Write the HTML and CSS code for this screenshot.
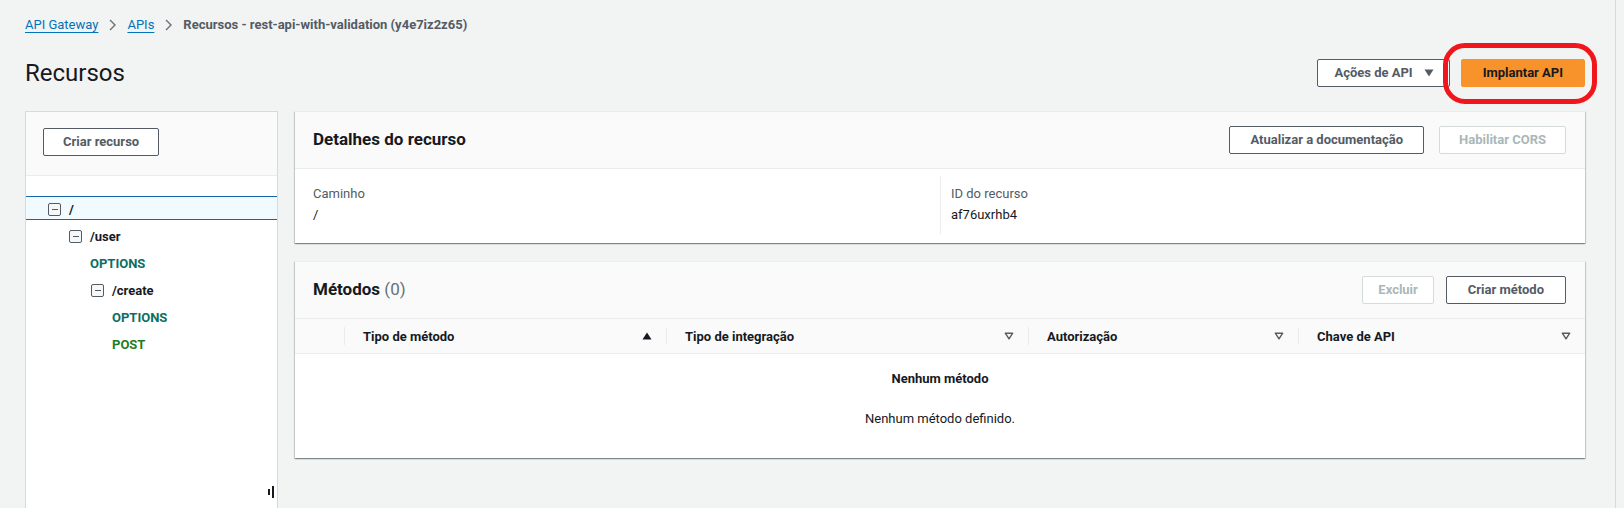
FILE: index.html
```html
<!DOCTYPE html>
<html lang="pt-BR">
<head>
<meta charset="utf-8">
<title>Recursos - API Gateway</title>
<link rel="stylesheet" href="styles.css">
</head>
<body>
<div class="app">
  <main class="main">
    <nav class="crumbs">
      <a class="crumb-link" href="#">API Gateway</a>
      <svg class="chev" width="7" height="12" viewBox="0 0 7 12"><path d="M1 1 L6 6 L1 11" fill="none" stroke="#687078" stroke-width="1.4"/></svg>
      <a class="crumb-link" href="#">APIs</a>
      <svg class="chev" width="7" height="12" viewBox="0 0 7 12"><path d="M1 1 L6 6 L1 11" fill="none" stroke="#687078" stroke-width="1.4"/></svg>
      <span class="crumb-current">Recursos - rest-api-with-validation (y4e7iz2z65)</span>
    </nav>

    <header class="page-head">
      <h1 class="page-title">Recursos</h1>
      <div class="head-actions">
        <button class="btn btn-normal btn-dropdown">Ações de API <svg class="caret" width="10" height="8" viewBox="0 0 10 8"><path d="M0.5 0.5 H9.5 L5 7.5 Z" fill="#545b64"/></svg></button>
        <div class="highlight-wrap">
          <button class="btn btn-primary">Implantar API</button>
          <span class="highlight-ring"></span>
        </div>
      </div>
    </header>

    <div class="content">
      <aside class="tree-panel">
        <div class="tree-head">
          <button class="btn btn-normal btn-create">Criar recurso</button>
        </div>
        <ul class="tree">
          <li class="tree-row is-selected lvl-0"><span class="toggle"></span><span class="res">/</span></li>
          <li class="tree-row lvl-1"><span class="toggle"></span><span class="res">/user</span></li>
          <li class="tree-row lvl-1m"><span class="method m-options">OPTIONS</span></li>
          <li class="tree-row lvl-2"><span class="toggle"></span><span class="res">/create</span></li>
          <li class="tree-row lvl-2m"><span class="method m-options">OPTIONS</span></li>
          <li class="tree-row lvl-2m"><span class="method m-post">POST</span></li>
        </ul>
        <span class="resize-handle"><span class="grip-short"></span><span class="grip-long"></span></span>
      </aside>

      <div class="cards">
        <section class="card">
          <div class="card-head">
            <h2 class="card-title">Detalhes do recurso</h2>
            <div class="card-actions card-actions-wide">
              <button class="btn btn-normal btn-doc">Atualizar a documentação</button>
              <button class="btn btn-disabled btn-cors" disabled>Habilitar CORS</button>
            </div>
          </div>
          <div class="details">
            <div class="kv">
              <div class="kv-label">Caminho</div>
              <div class="kv-value">/</div>
            </div>
            <div class="kv kv-divided">
              <div class="kv-label">ID do recurso</div>
              <div class="kv-value">af76uxrhb4</div>
            </div>
          </div>
        </section>

        <section class="card">
          <div class="card-head">
            <h2 class="card-title">Métodos <span class="count">(0)</span></h2>
            <div class="card-actions">
              <button class="btn btn-disabled btn-tight" disabled>Excluir</button>
              <button class="btn btn-normal btn-wide">Criar método</button>
            </div>
          </div>
          <div class="thead">
            <div class="th th-select"></div>
            <div class="th"><span>Tipo de método</span><svg class="sort" width="10" height="8" viewBox="0 0 10 8"><path d="M5 0.5 L9.5 7.5 H0.5 Z" fill="#16191f"/></svg></div>
            <div class="th"><span>Tipo de integração</span><svg class="sort" width="10" height="8" viewBox="0 0 10 8"><path d="M1.3 1.2 H8.7 L5 6.8 Z" fill="none" stroke="#545b64" stroke-width="1.4" stroke-linejoin="round"/></svg></div>
            <div class="th"><span>Autorização</span><svg class="sort" width="10" height="8" viewBox="0 0 10 8"><path d="M1.3 1.2 H8.7 L5 6.8 Z" fill="none" stroke="#545b64" stroke-width="1.4" stroke-linejoin="round"/></svg></div>
            <div class="th"><span>Chave de API</span><svg class="sort" width="10" height="8" viewBox="0 0 10 8"><path d="M1.3 1.2 H8.7 L5 6.8 Z" fill="none" stroke="#545b64" stroke-width="1.4" stroke-linejoin="round"/></svg></div>
          </div>
          <div class="empty">
            <div class="empty-title">Nenhum método</div>
            <div class="empty-desc">Nenhum método definido.</div>
          </div>
        </section>
      </div>
    </div>
  </main>
  <div class="rail"></div>
</div>
</body>
</html>
```

FILE: styles.css
```css
* { box-sizing: border-box; }

html, body { margin: 0; height: 100%; }

body {
  background: #f2f3f3;
  font-family: Roboto, "Liberation Sans", Arial, sans-serif;
  font-size: 13px;
  color: #16191f;
  overflow: hidden;
}

.app {
  display: flex;
  height: 100vh;
}

.main {
  flex: 0 0 1616px;
  display: flex;
  flex-direction: column;
  padding: 0 30px 0 25px;
  border-right: 1px solid #d5dbdb;
  min-height: 0;
}

.rail { flex: 1; }

/* breadcrumbs */
.crumbs {
  display: flex;
  align-items: center;
  height: 34px;
  padding-top: 16px;
  line-height: 18px;
}

.crumb-link {
  color: #0073bb;
  text-decoration: underline;
  text-underline-offset: 3px;
}

.chev { margin: 0 11px 0 11px; }

.crumb-current {
  font-weight: 700;
  color: #545b64;
}

/* page header */
.page-head {
  display: flex;
  align-items: center;
  justify-content: space-between;
  height: 32px;
  margin-top: 23px;
}

.page-title {
  margin: 0;
  font-size: 24px;
  font-weight: 400;
  line-height: 32px;
  color: #16191f;
}

.head-actions {
  display: flex;
  align-items: center;
  gap: 11px;
}

/* buttons */
.btn {
  display: inline-flex;
  align-items: center;
  height: 28px;
  padding: 0 18px;
  font-family: inherit;
  font-size: 13px;
  font-weight: 700;
  line-height: 26px;
  border-radius: 2px;
  border: 1px solid #545b64;
  background: #fff;
  color: #545b64;
  white-space: nowrap;
}

.btn-wide { padding: 0 21px; }
.btn-doc { padding: 0 20px; }
.btn-cors { padding: 0 19px; }
.btn-tight { padding: 0 15px; }
.btn-create { padding: 0 19px; }

.btn-dropdown {
  gap: 11px;
  padding: 0 15px 0 16px;
}

.btn-primary {
  background: #f8922a;
  border-color: #f8922a;
  color: #16191f;
  padding: 0 21px;
}

.btn-disabled {
  border-color: #d5dbdb;
  color: #aab7b8;
  background: #fff;
}

.highlight-wrap {
  position: relative;
  display: flex;
}

.highlight-ring {
  position: absolute;
  left: -18px;
  right: -12px;
  top: -16px;
  bottom: -17px;
  border: 5px solid #f0161c;
  border-radius: 22px;
  pointer-events: none;
}

/* content area */
.content {
  flex: 1;
  display: grid;
  grid-template-columns: 253px 1fr;
  column-gap: 17px;
  margin-top: 22px;
  min-height: 0;
}

/* resource tree panel */
.tree-panel {
  position: relative;
  background: #fff;
  border: 1px solid #d5dbdb;
  border-bottom: none;
}

.tree-head {
  padding: 16px 17px 19px;
  background: #fafafa;
  border-bottom: 1px solid #eaeded;
}

.tree {
  list-style: none;
  margin: 0;
  padding: 20px 0 0;
}

.tree-row {
  display: flex;
  align-items: center;
  height: 27px;
  padding-top: 2px;
  font-weight: 700;
}

.tree-row.is-selected {
  height: 24px;
  margin-bottom: 2px;
  padding-top: 3px;
  background: #f1faff;
  border-top: 1px solid #1466a8;
  border-bottom: 1px solid #1466a8;
}

.lvl-0 { padding-left: 22px; }
.lvl-1 { padding-left: 43px; }
.lvl-1m { padding-left: 64px; }
.lvl-2 { padding-left: 65px; }
.lvl-2m { padding-left: 86px; }

.toggle {
  display: flex;
  align-items: center;
  justify-content: center;
  width: 13px;
  height: 13px;
  margin-right: 8px;
  border: 1.5px solid #545b64;
  border-radius: 2px;
  background: #f6f7f7;
}

.toggle::after {
  content: "";
  width: 6px;
  height: 1.5px;
  background: #545b64;
}

.res {
  font-size: 13px;
  color: #16191f;
}

.method { font-size: 13px; }
.m-options { color: #0b6e62; }
.m-post { color: #1f7d1f; }

.resize-handle {
  position: absolute;
  right: 3px;
  bottom: 10px;
  display: flex;
  align-items: center;
  gap: 2px;
  height: 12px;
}

.grip-short {
  width: 2px;
  height: 6px;
  background: #16191f;
}

.grip-long {
  width: 2px;
  height: 12px;
  background: #16191f;
}

/* cards */
.cards {
  display: flex;
  flex-direction: column;
  gap: 18px;
  align-self: start;
}

.card {
  background: #fff;
  border-top: 1px solid #eaeded;
  box-shadow: 0 1px 1px 0 rgba(0, 28, 36, 0.3),
              1px 1px 1px 0 rgba(0, 28, 36, 0.15),
              -1px 1px 1px 0 rgba(0, 28, 36, 0.15);
}

.card-head {
  display: flex;
  align-items: center;
  justify-content: space-between;
  padding: 14px 19px 14px 18px;
  background: #fafafa;
  border-bottom: 1px solid #eaeded;
}

.card-title {
  margin: 0 0 3px;
  font-size: 17px;
  font-weight: 700;
  line-height: 24px;
  color: #16191f;
}

.count {
  font-weight: 400;
  color: #687078;
}

.card-actions {
  display: flex;
  gap: 12px;
}

.card-actions-wide { gap: 15px; }

/* details */
.details {
  display: grid;
  grid-template-columns: 1fr 1fr;
  padding: 7px 18px 9px;
}

.kv { padding: 8px 0; }

.kv-divided {
  border-left: 1px solid #eaeded;
  padding-left: 10px;
}

.kv-label {
  line-height: 20px;
  color: #545b64;
}

.kv-value {
  line-height: 22px;
  color: #16191f;
}

/* methods table */
.thead {
  display: grid;
  grid-template-columns: 49px 322px 362px 270px 1fr;
  align-items: center;
  height: 35px;
  background: #fafafa;
  border-bottom: 1px solid #eaeded;
}

.th {
  display: flex;
  align-items: center;
  justify-content: space-between;
  height: 18px;
  padding: 0 14px 0 18px;
  border-left: 1px solid #eaeded;
  font-weight: 700;
  color: #16191f;
}

.th-select { border-left: none; }

.empty {
  padding: 15px 0 29px;
  text-align: center;
}

.empty-title {
  font-weight: 700;
  line-height: 20px;
}

.empty-desc {
  margin-top: 20px;
  line-height: 20px;
  color: #16191f;
}
```
